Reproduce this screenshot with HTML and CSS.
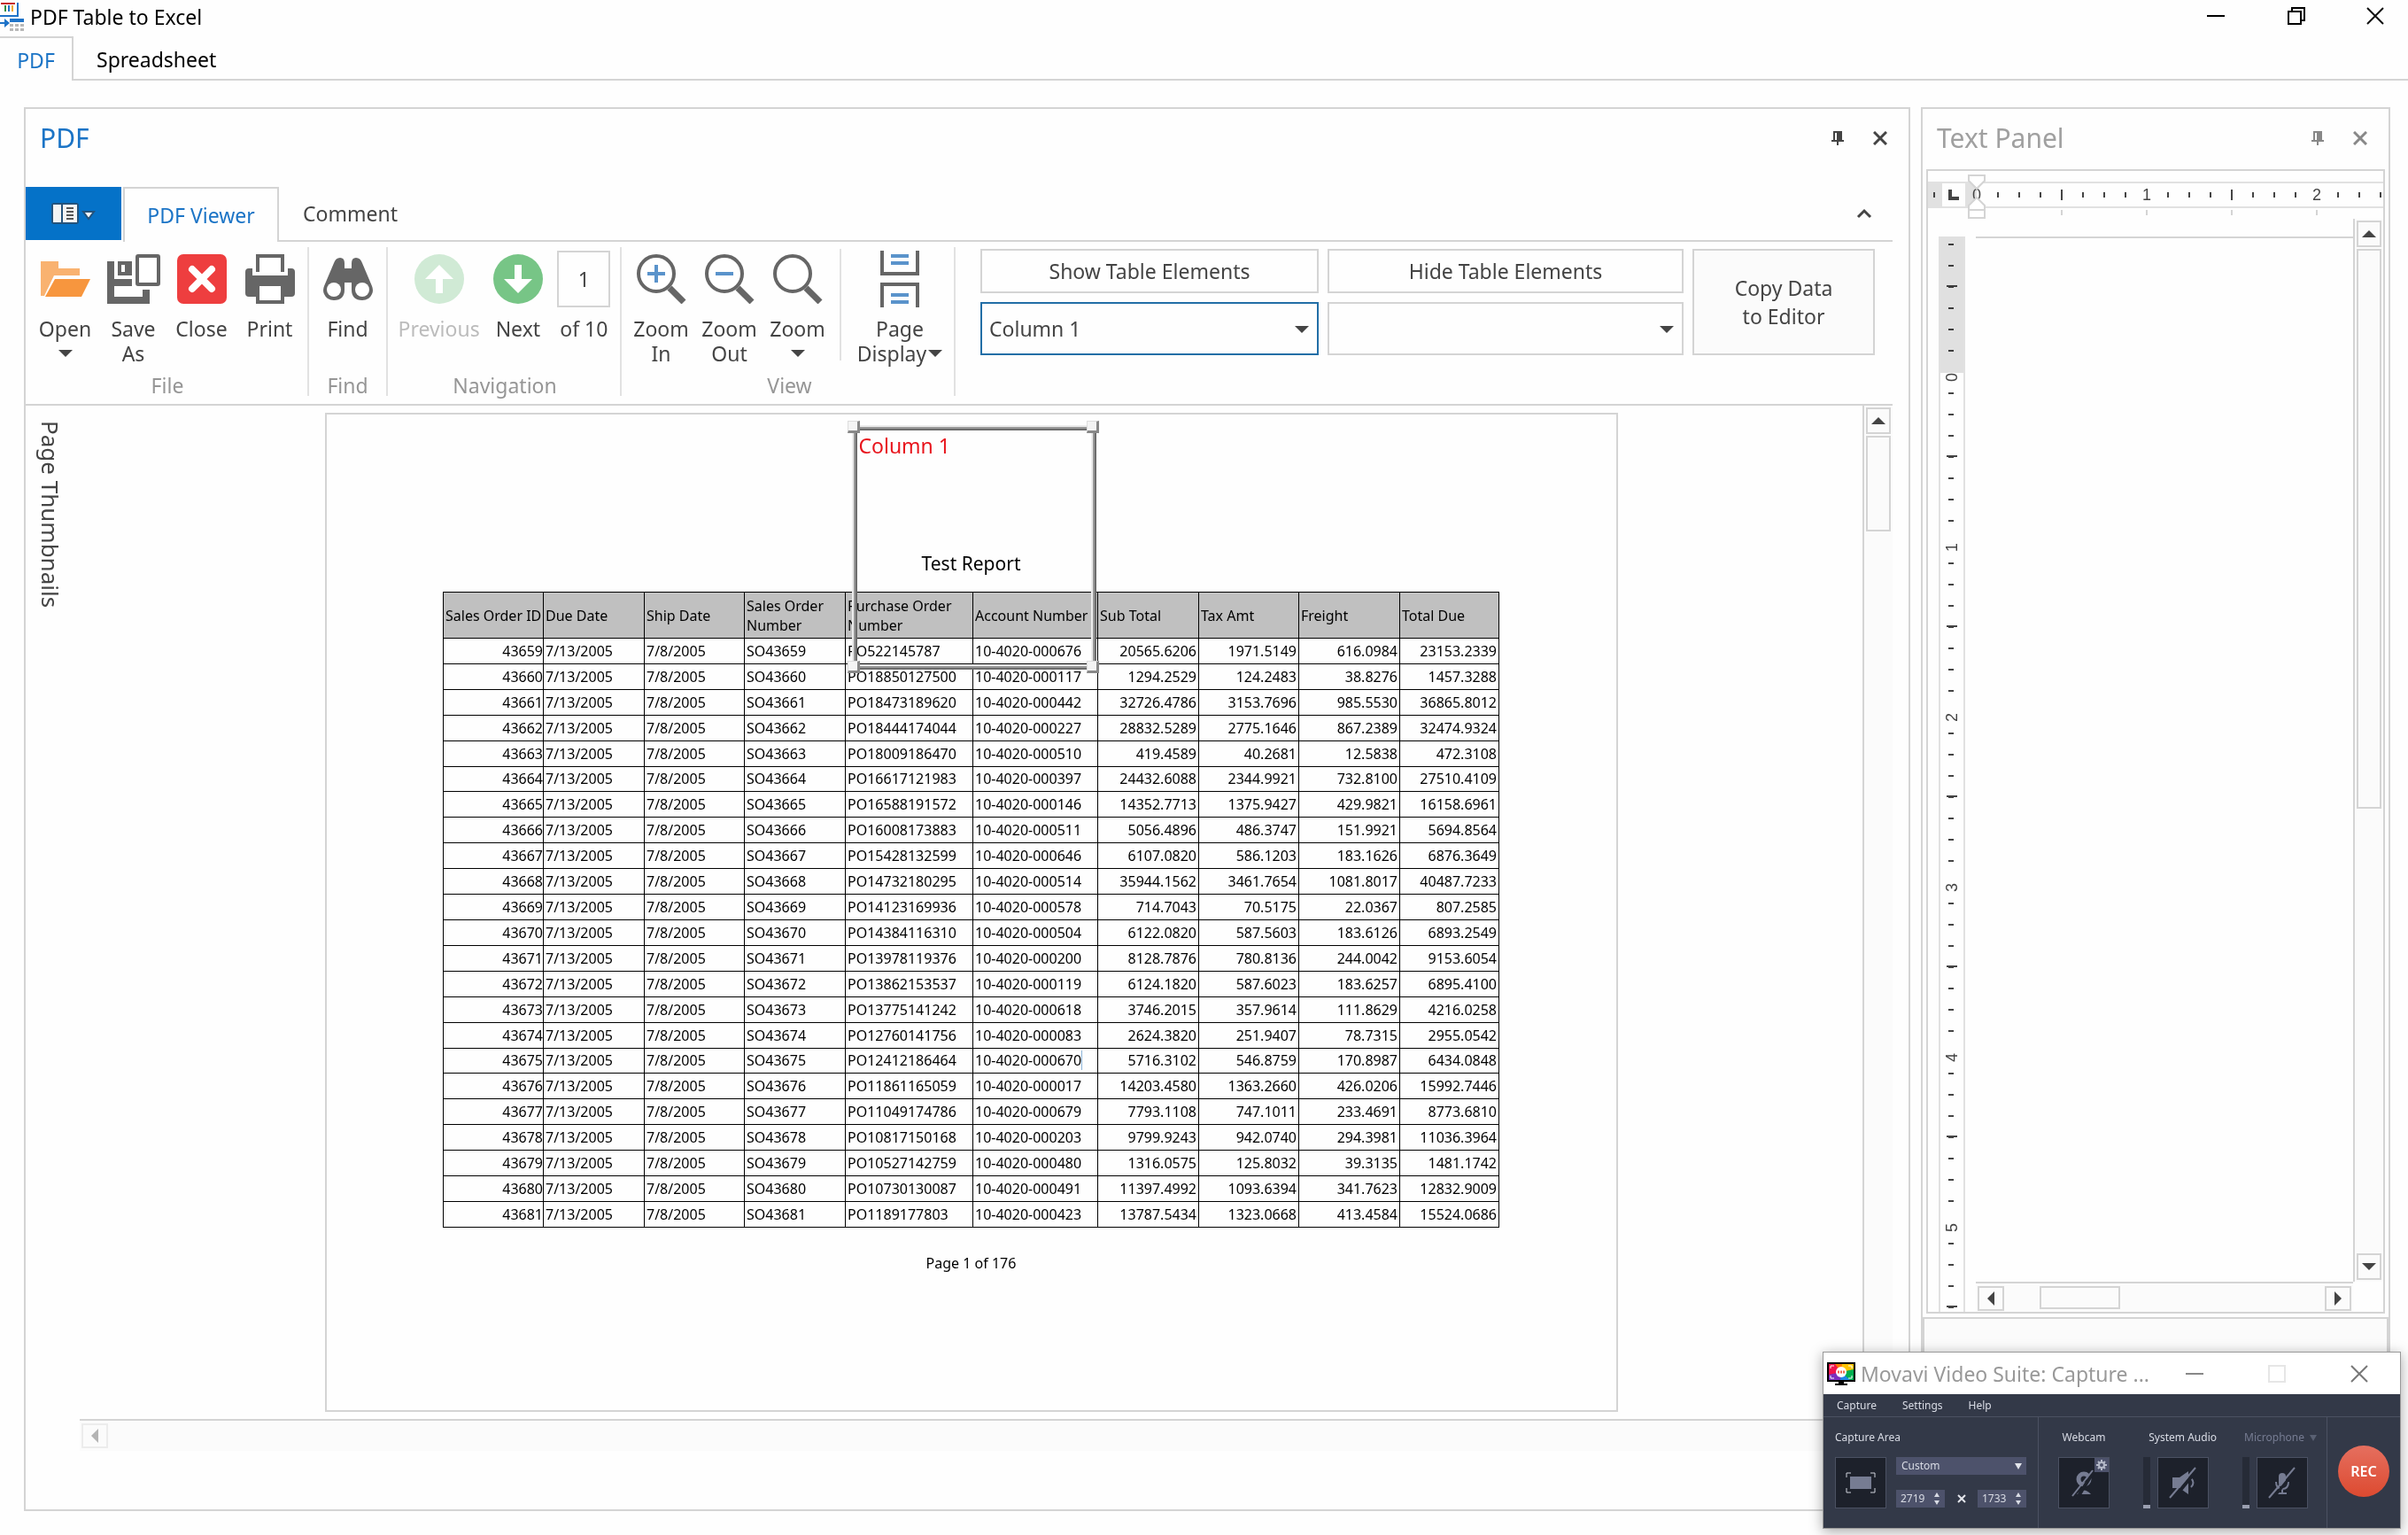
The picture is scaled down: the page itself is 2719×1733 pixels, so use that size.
FILE: index.html
```html
<!DOCTYPE html>
<html lang="en">
<head>
<meta charset="utf-8">
<title>PDF Table to Excel</title>
<link rel="stylesheet" href="styles.css">
</head>
<body>
<header class="titlebar">
  <svg class="app-icon" width="27" height="36" viewBox="0 0 27 36" aria-hidden="true">
    <path d="M1 2h16v2H1z" fill="#c62828"/><path d="M5 5h2v7H5z" fill="#2e8b3d"/><path d="M9 5h2v7H9z" fill="#1e73c8"/><path d="M13 5h2v7h-2z" fill="#f0a830"/>
    <path d="M20 2v15H0" fill="none" stroke="#1e73c8" stroke-width="2"/>
    <path d="M0 24h5v-4l6 5-6 5v-4H0z" fill="#1e73c8"/><path d="M11 20h16v4H11z" fill="#1e73c8"/>
    <path d="M11 26h4v3h-4zM17 26h4v3h-4zM23 26h4v3h-4zM11 31h4v3h-4zM17 31h4v3h-4zM23 31h4v3h-4z" fill="#b8b8b8"/>
  </svg>
  <h1 class="app-title">PDF Table to Excel</h1>
  <div class="window-buttons">
    <button class="win-btn" aria-label="Minimize"><svg width="20" height="20"><path d="M0 10h20" stroke="#000" stroke-width="2"/></svg></button>
    <button class="win-btn" aria-label="Restore"><svg width="20" height="20"><path d="M1 5h14v14H1zM5 5V1h14v14h-4" fill="none" stroke="#000" stroke-width="2"/></svg></button>
    <button class="win-btn" aria-label="Close"><svg width="20" height="20"><path d="M1 1l18 18M19 1L1 19" stroke="#111" stroke-width="2"/></svg></button>
  </div>
</header>
<nav class="doc-tabs">
  <button class="doc-tab active">PDF</button>
  <button class="doc-tab">Spreadsheet</button>
</nav>
<main class="workspace">
  <section class="panel pdf-panel">
    <div class="panel-head">
      <h2 class="panel-title">PDF</h2>
      <button class="head-btn" aria-label="Pin"><svg width="14" height="18" viewBox="0 0 14 18"><path d="M2 1h10v10h2v2H8v4H6v-4H0v-2h2z" fill="#444"/><path d="M4 3h2v8H4z" fill="#fff"/></svg></button>
      <button class="head-btn" aria-label="Close panel"><svg width="16" height="16"><path d="M1 1l14 14M15 1L1 15" stroke="#444" stroke-width="3"/></svg></button>
    </div>
    <div class="ribbon-tabs">
      <button class="file-btn" aria-label="File menu">
        <svg width="52" height="26" viewBox="0 0 52 26"><rect x="1" y="1" width="31" height="24" rx="3" fill="#24537c"/><path d="M3 3h9v20H3zM14 3h16v20H14z" fill="#f4f4f4"/><path d="M18 7h8M18 11h8M18 15h8M18 19h8" stroke="#555" stroke-width="2"/><path d="M37 11h12l-6 8z" fill="#fff" stroke="#24537c" stroke-width="2"/></svg>
      </button>
      <button class="ribbon-tab active">PDF Viewer</button>
      <button class="ribbon-tab">Comment</button>
      <button class="collapse-btn" aria-label="Collapse ribbon"><svg width="18" height="12"><path d="M2 10l7-7 7 7" fill="none" stroke="#444" stroke-width="3"/></svg></button>
    </div>
    <div class="ribbon">
      <div class="group file-group">
        <div class="group-row">
          <button class="tool"><span class="tool-icon"><svg width="56" height="56" viewBox="0 0 56 56"><path d="M0 8h20v8h24v8H15L4 47H0z" fill="#f9b270"/><path d="M16 28h40L46 48H5z" fill="#f7963e"/></svg></span>Open<i class="caret"></i></button>
          <button class="tool"><span class="tool-icon"><svg width="60" height="56" viewBox="0 0 60 56"><path d="M0 8h8v20h20v8H8v12h32v-8h8v16H0z" fill="#666"/><path d="M12 8h16v16H12zM16 12v8h4v-8z" fill="#666" fill-rule="evenodd"/><rect x="34" y="2" width="24" height="32" rx="1" fill="#fff" stroke="#666" stroke-width="4"/></svg></span>Save<br>As</button>
          <button class="tool"><span class="tool-icon"><svg width="56" height="56"><rect width="56" height="56" rx="7" fill="#ee3e3f"/><path d="M17 17l22 22M39 17L17 39" stroke="#fff" stroke-width="8" stroke-linecap="round"/></svg></span>Close</button>
          <button class="tool"><span class="tool-icon"><svg width="56" height="56"><path d="M14 20V2h28v18" fill="#fff" stroke="#666" stroke-width="4"/><path d="M4 16h4v8h40v-8h4q4 0 4 4v24q0 4-4 4H4q-4 0-4-4V20q0-4 4-4z" fill="#666"/><path d="M14 34h28v20H14z" fill="#fff" stroke="#666" stroke-width="4"/></svg></span>Print</button>
        </div>
        <div class="group-name">File</div>
      </div>
      <div class="group find-group">
        <div class="group-row">
          <button class="tool"><span class="tool-icon"><svg width="56" height="56"><path d="M12 10q2-6 7-6 5 0 5 6v6h8v-6q0-6 5-6 5 0 7 6l11 26q2 5 0 9-3 7-11 7-12 0-12-12v-8h-8v8q0 12-12 12-8 0-11-7-2-4 0-9z" fill="#666"/><circle cx="12" cy="40" r="8" fill="#fff"/><circle cx="44" cy="40" r="8" fill="#fff"/></svg></span>Find</button>
        </div>
        <div class="group-name">Find</div>
      </div>
      <div class="group nav-group">
        <div class="group-row">
          <button class="tool wide" disabled><span class="tool-icon"><svg width="56" height="56"><circle cx="28" cy="28" r="28" fill="#d0ead5"/><path d="M28 12l16 16H32v16h-8V28H12z" fill="#fff"/></svg></span>Previous</button>
          <button class="tool"><span class="tool-icon"><svg width="56" height="56"><circle cx="28" cy="28" r="28" fill="#77c586"/><path d="M28 44L12 28h12V12h8v16h12z" fill="#fff"/></svg></span>Next</button>
          <div class="pager"><input class="page-input" id="page" type="text" value="1"><label for="page">of 10</label></div>
        </div>
        <div class="group-name">Navigation</div>
      </div>
      <div class="group view-group">
        <div class="group-row">
          <button class="tool"><span class="tool-icon"><svg width="56" height="56"><circle cx="22" cy="22" r="20" fill="#fff" stroke="#666" stroke-width="4"/><path d="M37 38l16 16" stroke="#666" stroke-width="7"/><path d="M12 22h20M22 12v20" stroke="#5a93cb" stroke-width="4"/></svg></span>Zoom<br>In</button>
          <button class="tool"><span class="tool-icon"><svg width="56" height="56"><circle cx="22" cy="22" r="20" fill="#fff" stroke="#666" stroke-width="4"/><path d="M37 38l16 16" stroke="#666" stroke-width="7"/><path d="M12 22h20" stroke="#5a93cb" stroke-width="4"/></svg></span>Zoom<br>Out</button>
          <button class="tool"><span class="tool-icon"><svg width="56" height="56"><circle cx="22" cy="22" r="20" fill="#fff" stroke="#666" stroke-width="4"/><path d="M37 38l16 16" stroke="#666" stroke-width="7"/></svg></span>Zoom<i class="caret"></i></button>
          <div class="divider"></div>
          <button class="tool display"><span class="tool-icon"><svg width="44" height="64"><path d="M2 0v26h40V0M2 64V38h40v26" fill="none" stroke="#666" stroke-width="4"/><path d="M12 6h20M12 14h20M12 50h20M12 58h20" stroke="#5a93cb" stroke-width="4"/></svg></span>Page<br>Display<i class="caret inline"></i></button>
        </div>
        <div class="group-name">View</div>
      </div>
      <div class="table-tools">
        <button class="box-btn">Show Table Elements</button>
        <button class="box-btn">Hide Table Elements</button>
        <button class="box-btn copy-btn">Copy Data<br>to Editor</button>
        <div class="combo focused"><select aria-label="Table element"><option>Column 1</option></select></div>
        <div class="combo"><select aria-label="Hidden element"><option></option></select></div>
      </div>
    </div>
    <div class="viewer">
      <aside class="thumbs"><button class="thumbs-tab">Page Thumbnails</button></aside>
      <div class="viewport">
        <article class="page">
          <h3 class="report-title">Test Report</h3>
          <table class="report">
            <colgroup><col class="c-a"><col class="c-b"><col class="c-a"><col class="c-b"><col class="c-po"><col class="c-acc"><col class="c-b"><col class="c-a"><col class="c-b"><col class="c-last"></colgroup>
            <thead><tr><th>Sales Order ID</th><th>Due Date</th><th>Ship Date</th><th>Sales Order Number</th><th>Purchase Order Number</th><th>Account Number</th><th>Sub Total</th><th>Tax Amt</th><th>Freight</th><th>Total Due</th></tr></thead>
            <tbody>
            <tr><td>43659</td><td>7/13/2005</td><td>7/8/2005</td><td>SO43659</td><td>PO522145787</td><td>10-4020-000676</td><td>20565.6206</td><td>1971.5149</td><td>616.0984</td><td>23153.2339</td></tr>
            <tr><td>43660</td><td>7/13/2005</td><td>7/8/2005</td><td>SO43660</td><td>PO18850127500</td><td>10-4020-000117</td><td>1294.2529</td><td>124.2483</td><td>38.8276</td><td>1457.3288</td></tr>
            <tr><td>43661</td><td>7/13/2005</td><td>7/8/2005</td><td>SO43661</td><td>PO18473189620</td><td>10-4020-000442</td><td>32726.4786</td><td>3153.7696</td><td>985.5530</td><td>36865.8012</td></tr>
            <tr><td>43662</td><td>7/13/2005</td><td>7/8/2005</td><td>SO43662</td><td>PO18444174044</td><td>10-4020-000227</td><td>28832.5289</td><td>2775.1646</td><td>867.2389</td><td>32474.9324</td></tr>
            <tr><td>43663</td><td>7/13/2005</td><td>7/8/2005</td><td>SO43663</td><td>PO18009186470</td><td>10-4020-000510</td><td>419.4589</td><td>40.2681</td><td>12.5838</td><td>472.3108</td></tr>
            <tr><td>43664</td><td>7/13/2005</td><td>7/8/2005</td><td>SO43664</td><td>PO16617121983</td><td>10-4020-000397</td><td>24432.6088</td><td>2344.9921</td><td>732.8100</td><td>27510.4109</td></tr>
            <tr><td>43665</td><td>7/13/2005</td><td>7/8/2005</td><td>SO43665</td><td>PO16588191572</td><td>10-4020-000146</td><td>14352.7713</td><td>1375.9427</td><td>429.9821</td><td>16158.6961</td></tr>
            <tr><td>43666</td><td>7/13/2005</td><td>7/8/2005</td><td>SO43666</td><td>PO16008173883</td><td>10-4020-000511</td><td>5056.4896</td><td>486.3747</td><td>151.9921</td><td>5694.8564</td></tr>
            <tr><td>43667</td><td>7/13/2005</td><td>7/8/2005</td><td>SO43667</td><td>PO15428132599</td><td>10-4020-000646</td><td>6107.0820</td><td>586.1203</td><td>183.1626</td><td>6876.3649</td></tr>
            <tr><td>43668</td><td>7/13/2005</td><td>7/8/2005</td><td>SO43668</td><td>PO14732180295</td><td>10-4020-000514</td><td>35944.1562</td><td>3461.7654</td><td>1081.8017</td><td>40487.7233</td></tr>
            <tr><td>43669</td><td>7/13/2005</td><td>7/8/2005</td><td>SO43669</td><td>PO14123169936</td><td>10-4020-000578</td><td>714.7043</td><td>70.5175</td><td>22.0367</td><td>807.2585</td></tr>
            <tr><td>43670</td><td>7/13/2005</td><td>7/8/2005</td><td>SO43670</td><td>PO14384116310</td><td>10-4020-000504</td><td>6122.0820</td><td>587.5603</td><td>183.6126</td><td>6893.2549</td></tr>
            <tr><td>43671</td><td>7/13/2005</td><td>7/8/2005</td><td>SO43671</td><td>PO13978119376</td><td>10-4020-000200</td><td>8128.7876</td><td>780.8136</td><td>244.0042</td><td>9153.6054</td></tr>
            <tr><td>43672</td><td>7/13/2005</td><td>7/8/2005</td><td>SO43672</td><td>PO13862153537</td><td>10-4020-000119</td><td>6124.1820</td><td>587.6023</td><td>183.6257</td><td>6895.4100</td></tr>
            <tr><td>43673</td><td>7/13/2005</td><td>7/8/2005</td><td>SO43673</td><td>PO13775141242</td><td>10-4020-000618</td><td>3746.2015</td><td>357.9614</td><td>111.8629</td><td>4216.0258</td></tr>
            <tr><td>43674</td><td>7/13/2005</td><td>7/8/2005</td><td>SO43674</td><td>PO12760141756</td><td>10-4020-000083</td><td>2624.3820</td><td>251.9407</td><td>78.7315</td><td>2955.0542</td></tr>
            <tr><td>43675</td><td>7/13/2005</td><td>7/8/2005</td><td>SO43675</td><td>PO12412186464</td><td><span class="insertion">10-4020-000670</span></td><td>5716.3102</td><td>546.8759</td><td>170.8987</td><td>6434.0848</td></tr>
            <tr><td>43676</td><td>7/13/2005</td><td>7/8/2005</td><td>SO43676</td><td>PO11861165059</td><td>10-4020-000017</td><td>14203.4580</td><td>1363.2660</td><td>426.0206</td><td>15992.7446</td></tr>
            <tr><td>43677</td><td>7/13/2005</td><td>7/8/2005</td><td>SO43677</td><td>PO11049174786</td><td>10-4020-000679</td><td>7793.1108</td><td>747.1011</td><td>233.4691</td><td>8773.6810</td></tr>
            <tr><td>43678</td><td>7/13/2005</td><td>7/8/2005</td><td>SO43678</td><td>PO10817150168</td><td>10-4020-000203</td><td>9799.9243</td><td>942.0740</td><td>294.3981</td><td>11036.3964</td></tr>
            <tr><td>43679</td><td>7/13/2005</td><td>7/8/2005</td><td>SO43679</td><td>PO10527142759</td><td>10-4020-000480</td><td>1316.0575</td><td>125.8032</td><td>39.3135</td><td>1481.1742</td></tr>
            <tr><td>43680</td><td>7/13/2005</td><td>7/8/2005</td><td>SO43680</td><td>PO10730130087</td><td>10-4020-000491</td><td>11397.4992</td><td>1093.6394</td><td>341.7623</td><td>12832.9009</td></tr>
            <tr><td>43681</td><td>7/13/2005</td><td>7/8/2005</td><td>SO43681</td><td>PO1189177803</td><td>10-4020-000423</td><td>13787.5434</td><td>1323.0668</td><td>413.4584</td><td>15524.0686</td></tr>
            </tbody>
          </table>
          <p class="page-no">Page 1 of 176</p>
          <div class="selection">
            <span class="selection-label">Column 1</span>
            <i class="handle tl"></i><i class="handle tr"></i><i class="handle bl"></i><i class="handle br"></i>
          </div>
        </article>
      </div>
      <div class="vscroll">
        <button class="sb-btn" aria-label="Scroll up"><svg width="16" height="8"><path d="M0 8h16L8 0z" fill="#444"/></svg></button>
        <div class="sb-thumb doc-thumb"></div>
      </div>
      <div class="hscroll doc-hscroll">
        <button class="sb-btn" disabled aria-label="Scroll left"><svg width="8" height="16"><path d="M8 0v16L0 8z" fill="#b4b4b4"/></svg></button>
      </div>
    </div>
  </section>
  <div class="side">
    <section class="panel text-panel">
      <div class="panel-head muted">
        <h2 class="panel-title">Text Panel</h2>
        <button class="head-btn" aria-label="Pin"><svg width="14" height="18" viewBox="0 0 14 18"><path d="M2 1h10v10h2v2H8v4H6v-4H0v-2h2z" fill="#888"/><path d="M4 3h2v8H4z" fill="#fff"/></svg></button>
        <button class="head-btn" aria-label="Close panel"><svg width="16" height="16"><path d="M1 1l14 14M15 1L1 15" stroke="#888" stroke-width="3"/></svg></button>
      </div>
      <div class="editor">
        <div class="hruler">
          <div class="hr-pre"></div>
          <button class="tab-well" aria-label="Tab type"><svg width="12" height="12"><path d="M2 0v10h10" fill="none" stroke="#444" stroke-width="4"/></svg></button>
          <div class="hr-margin"></div>
          <div class="hr-scale"><span><b>0</b></span><span><b>1</b></span><span><b>2</b></span></div>
          <svg class="indent" width="20" height="50"><path d="M1 1h18v6l-9 9-9-9z M10 26l9 9v5H1v-5z M1 40h18v9H1z" fill="#fff" stroke="#d4d4d4" stroke-width="2"/></svg>
        </div>
        <div class="tab-stops"></div>
        <div class="editor-body">
          <div class="vruler"><div class="vr-margin"></div><div class="vr-nums"><span>0</span><span>1</span><span>2</span><span>3</span><span>4</span><span>5</span></div></div>
          <div class="sheet"></div>
          <div class="vscroll">
            <button class="sb-btn" aria-label="Scroll up"><svg width="16" height="8"><path d="M0 8h16L8 0z" fill="#444"/></svg></button>
            <div class="sb-thumb"></div>
            <button class="sb-btn end" aria-label="Scroll down"><svg width="16" height="8"><path d="M0 0h16L8 8z" fill="#444"/></svg></button>
          </div>
          <div class="hscroll">
            <button class="sb-btn" aria-label="Scroll left"><svg width="8" height="16"><path d="M8 0v16L0 8z" fill="#444"/></svg></button>
            <div class="sb-thumb"></div>
            <button class="sb-btn end" aria-label="Scroll right"><svg width="8" height="16"><path d="M0 0v16l8-8z" fill="#444"/></svg></button>
          </div>
        </div>
      </div>
      <div class="lower-pane"></div>
    </section>
  </div>
</main>

<section class="recorder">
  <div class="rec-title">
    <svg width="32" height="26" viewBox="0 0 32 26"><path d="M0 0h32v22H0z" fill="#000"/><path d="M2 2h9l5 9-14 5z" fill="#f0134d"/><path d="M9 2h12l-5 9z" fill="#ff7a00"/><path d="M17 2h13v7l-14 2z" fill="#ffc400"/><path d="M30 8v12h-5l-9-9z" fill="#00b050"/><path d="M16 11l10 9H13z" fill="#1e88e5"/><path d="M16 11L2 14v6h13z" fill="#7b2fbe"/><path d="M4 7V4h4M24 4h4v3M28 15v3h-4M8 18H4v-3" fill="none" stroke="#fff"/><circle cx="16" cy="11" r="6" fill="#fff"/><path d="M12 11h8" stroke="#f26a4f" stroke-width="3" stroke-dasharray="2 1"/><path d="M13 22h6v2h4v2H9v-2h4z" fill="#000"/></svg>
    <h2>Movavi Video Suite: Capture ...</h2>
    <button class="win-btn" aria-label="Minimize"><svg width="20" height="20"><path d="M0 10h20" stroke="#888" stroke-width="2"/></svg></button>
    <button class="win-btn" disabled aria-label="Maximize"><svg width="20" height="20"><path d="M1 1h18v18H1z" fill="none" stroke="#e6e6e6" stroke-width="2"/></svg></button>
    <button class="win-btn" aria-label="Close"><svg width="20" height="20"><path d="M1 1l18 18M19 1L1 19" stroke="#777" stroke-width="2"/></svg></button>
  </div>
  <nav class="rec-menu"><button>Capture</button><button>Settings</button><button>Help</button></nav>
  <div class="rec-body">
    <div class="rec-area">
      <span class="rec-label">Capture Area</span>
      <button class="rec-tile" aria-label="Select area"><svg width="34" height="24"><rect x="5" y="5" width="24" height="14" fill="#767c92"/><path d="M1 6V1h5M28 1h5v5M33 18v5h-5M6 23H1v-5" fill="none" stroke="#d0d3dc" stroke-width="1"/></svg></button>
      <div class="rec-select"><select aria-label="Preset"><option>Custom</option></select></div>
      <div class="rec-size">
        <div class="spin"><input type="text" value="2719" aria-label="Width"><svg width="6" height="14"><path d="M0 5h6L3 0zM0 9h6l-3 5z" fill="#d8dbe4"/></svg></div>
        <svg width="10" height="10"><path d="M1 1l8 8M9 1L1 9" stroke="#e4e6ec" stroke-width="2"/></svg>
        <div class="spin"><input type="text" value="1733" aria-label="Height"><svg width="6" height="14"><path d="M0 5h6L3 0zM0 9h6l-3 5z" fill="#d8dbe4"/></svg></div>
      </div>
    </div>
    <div class="rec-sources">
      <div class="source">
        <span class="rec-label">Webcam</span>
        <div class="source-row"><button class="rec-tile webcam" aria-label="Webcam"><svg width="34" height="38"><circle cx="17" cy="15" r="6" fill="none" stroke="#767c92" stroke-width="5"/><path d="M9 32q8-9 16 0z" fill="#767c92"/><path d="M29 5L9 37" stroke="#1d212b" stroke-width="4"/><path d="M27 5L4 34" stroke="#767c92" stroke-width="2"/></svg>
          <span class="gear"><svg width="12" height="12"><circle cx="6" cy="6" r="3" fill="none" stroke="#b4b9c8" stroke-width="2"/><path d="M6 0v3M6 9v3M0 6h3M9 6h3M2 2l2 2M8 8l2 2M10 2L8 4M4 8l-2 2" stroke="#b4b9c8" stroke-width="2"/></svg></span></button></div>
      </div>
      <div class="source audio">
        <span class="rec-label">System Audio</span>
        <div class="source-row"><i class="level"></i><button class="rec-tile" aria-label="System audio"><svg width="34" height="38"><path d="M5 13h8l10-7v26l-10-7H5z" fill="#767c92"/><path d="M26 14q5 5 0 10" fill="none" stroke="#767c92" stroke-width="2"/><path d="M33 4L6 37" stroke="#1d212b" stroke-width="4"/><path d="M31 2L2 36" stroke="#767c92" stroke-width="2"/></svg></button></div>
      </div>
      <div class="source mic">
        <span class="rec-label">Microphone<i></i></span>
        <div class="source-row"><i class="level"></i><button class="rec-tile" aria-label="Microphone"><svg width="34" height="38"><rect x="13" y="8" width="8" height="15" rx="4" fill="#767c92"/><path d="M10 18q0 8 7 8t7-8M17 26v5M12 31h10" fill="none" stroke="#767c92" stroke-width="2"/><path d="M33 4L6 37" stroke="#1d212b" stroke-width="3"/><path d="M31 2L2 36" stroke="#767c92" stroke-width="2"/></svg></button></div>
      </div>
    </div>
    <div class="rec-go"><button class="rec-btn">REC</button></div>
  </div>
</section>
</body>
</html>
```
FILE: styles.css
```css
* { box-sizing: border-box; }
html, body { height: 100%; margin: 0; }
body {
  display: flex; flex-direction: column; overflow: hidden;
  background: #fefefe; color: #444;
  font: 23px/28px "Noto Sans", "Open Sans", sans-serif;
}
h1, h2, h3, p { margin: 0; font-weight: 400; }
button, input, select { font: inherit; color: inherit; background: none; border: 0; border-radius: 0; padding: 0; margin: 0; appearance: none; outline: 0; }
svg { display: block; flex: none; }
i { font-style: normal; }

/* window frame */
.titlebar { display: flex; align-items: center; height: 41px; flex: none; color: #000; padding-bottom: 4px; }
.app-title { font-size: 23px; margin-left: 7px; }
.window-buttons { margin-left: auto; display: flex; height: 34px; padding-bottom: 2px; }
.win-btn { display: flex; align-items: center; justify-content: center; width: 93px; }
.window-buttons .win-btn:last-child { width: 74px; margin-left: 8px; }
.window-buttons .win-btn:nth-child(2) { width: 89px; }
.doc-tabs { display: flex; height: 50px; flex: none; }
.doc-tabs::after { content: ""; flex: 1; border-bottom: 2px solid #d4d4d4; }
.doc-tab { padding: 4px 26px 0; color: #000; border-bottom: 2px solid #d4d4d4; }
.doc-tab.active { width: 83px; padding: 2px 0 0; color: #1b74c6; border: 2px solid #d4d4d4; border-width: 2px 2px 0 0; }

/* docked panels */
.workspace { flex: 1; min-height: 0; display: flex; gap: 12px; padding: 30px 20px 27px 27px; }
.panel { border: 2px solid #d4d4d4; display: flex; flex-direction: column; min-height: 0; }
.pdf-panel { flex: 1; min-width: 0; padding: 0 18px 66px 0; }
.side { width: 530px; display: flex; flex-direction: column; }
.text-panel { flex: 1; }
.panel-head { display: flex; align-items: center; flex: none; height: 68px; padding: 0 0 2px 16px; color: #1b74c6; }
.panel-title { flex: 1; font-size: 30px; line-height: 36px; }
.panel-head.muted { color: #a0a0a0; }
.head-btn { width: 48px; display: flex; justify-content: center; }
.pdf-panel .panel-head { margin-right: -10px; }
.muted .head-btn:last-child { margin-right: 8px; }

/* ribbon */
.ribbon-tabs { display: flex; flex: none; margin-top: 20px; height: 62px; }
.file-btn { width: 108px; background: #0572c8; margin-bottom: 2px; display: flex; align-items: center; justify-content: center; }
.ribbon-tab { padding: 0 27px; border-bottom: 2px solid #d4d4d4; }
.ribbon-tab.active { width: 176px; padding: 0; margin-left: 2px; color: #1b74c6; border: 2px solid #d4d4d4; border-bottom: 0; }
.collapse-btn { flex: 1; display: flex; justify-content: flex-end; align-items: center; padding-right: 23px; border-bottom: 2px solid #d4d4d4; }
.ribbon { display: flex; flex: none; height: 185px; border-bottom: 2px solid #d4d4d4; }
.group { display: flex; flex-direction: column; justify-content: space-between; margin: 6px 0 9px; border-right: 2px solid #e2e2e2; }
.group-row { display: flex; height: 129px; }
.group-name { text-align: center; color: #969696; margin-bottom: -2px; }
.tool { width: 77px; display: block; text-align: center; align-self: flex-start; }
.tool-icon { display: flex; align-items: center; justify-content: center; height: 72px; margin-bottom: 6px; }
.tool:disabled { color: #bcbcbc; }
.caret { display: block; width: 0; margin: 10px auto 0; border: 8px solid transparent; border-top-color: #444; border-bottom: 0; }
.caret.inline { display: inline-block; margin: 0 0 5px 2px; }
.file-group { width: 320px; padding: 0 4px 0 6px; }
.find-group { width: 89px; padding: 0 5px; }
.nav-group { width: 264px; padding: 0 3px 0 5px; }
.nav-group .tool { width: 74px; }
.nav-group .tool.wide { width: 106px; }
.view-group { width: 377px; padding: 0 2px 0 6px; }
.divider { width: 2px; height: 126px; margin: 2px 0 0 9px; background: #e2e2e2; }
.tool.display { width: 124px; padding-left: 8px; }
.pager { width: 76px; text-align: center; }
.page-input { width: 60px; height: 64px; margin: 4px 0 10px; display: inline-block; vertical-align: top; text-align: center; border: 2px solid #d4d4d4; }
.table-tools {
  flex: 1; display: grid; grid-template: 50px 60px / 382fr 402fr 206fr; gap: 10px;
  padding: 8px 20px 0 28px;
}
.box-btn { border: 2px solid #d4d4d4; }
.copy-btn { grid-area: 1 / 3 / 3 / 4; background: #fbfbfb; line-height: 32px; }
.combo { position: relative; border: 2px solid #d4d4d4; display: flex; }
.combo.focused { border-color: #226ea6; }
.combo select { width: 100%; padding-left: 8px; }
.combo::after { content: ""; position: absolute; right: 9px; top: 25px; border: 8px solid transparent; border-top-color: #444; border-bottom: 0; pointer-events: none; }

/* document viewer */
.viewer { flex: 1; min-height: 0; display: grid; grid-template: minmax(0, 1fr) 36px / 61px minmax(0, 1fr) 34px; }
.thumbs { grid-row: 1 / 3; }
.thumbs-tab { writing-mode: vertical-rl; font-size: 26px; line-height: 36px; margin: 17px 0 0 10px; }
.viewport { display: flex; justify-content: center; padding: 8px 0; }
.page { position: relative; width: 1460px; border: 2px solid #d4d4d4; color: #000; display: flex; flex-direction: column; align-items: center; }
.report-title { font-size: 21px; line-height: 28px; margin-top: 154px; }
.report { table-layout: fixed; width: 1192px; height: 718px; margin-top: 18px; border-collapse: collapse; font-size: 16px; line-height: 22px; }
.c-a { width: 113px; } .c-b { width: 114px; } .c-po { width: 144px; } .c-acc { width: 141px; } .c-last { width: 112px; }
.report th, .report td { border: 1px solid #000; padding: 0 2px; text-align: left; white-space: nowrap; }
.report th { height: 52px; background: #c0c0c0; font-weight: 400; white-space: normal; }
.report th:first-child { white-space: nowrap; }
.report td:first-child, .report td:nth-child(n+7) { text-align: right; }
.report td:first-child { padding-right: 0; }
.insertion { border-right: 1px solid #8cb4d8; }
.page-no { font-size: 16px; line-height: 24px; margin-top: 28px; }

.selection {
  position: absolute; left: 593px; top: 12px; width: 276px; height: 276px; padding: 9px 8px;
  background:
    linear-gradient(#ececec 0 2px, #999 2px 4px, #6c6c6c 4px) 0 0 / 100% 6px no-repeat,
    linear-gradient(#ececec 0 2px, #999 2px 4px, #6c6c6c 4px) 0 100% / 100% 6px no-repeat,
    linear-gradient(90deg, #ececec 0 2px, #999 2px 4px, #6c6c6c 4px) 0 0 / 6px 100% no-repeat,
    linear-gradient(90deg, #ececec 0 2px, #999 2px 4px, #6c6c6c 4px) 100% 0 / 6px 100% no-repeat;
}
.selection-label { color: #e8141c; }
.handle { position: absolute; width: 14px; height: 14px; background: #f4f4f4; border: solid; border-width: 1px 3px 3px 1px; border-color: #ddd #888 #888 #ddd; }
.tl, .tr { top: -5px; } .bl, .br { bottom: -4px; }
.tl, .bl { left: -5px; } .tr, .br { right: -3px; }

/* scroll bars */
.vscroll { background: #fbfbfb; border-left: 2px solid #d4d4d4; padding: 2px; display: flex; flex-direction: column; gap: 2px; }
.hscroll { background: #fbfbfb; border-top: 2px solid #d4d4d4; padding: 3px 2px; display: flex; }
.sb-btn { flex: none; width: 28px; height: 30px; border: 2px solid #d4d4d4; display: flex; align-items: center; justify-content: center; }
.hscroll .sb-btn { width: 30px; height: 28px; }
.sb-btn:disabled { border-color: #ececec; }
.sb-thumb { border: 2px solid #d4d4d4; }
.doc-thumb { height: 108px; width: 28px; }
.doc-hscroll { grid-column: 2 / 3; }

/* text editor */
.editor { margin: 0 4px; border: 2px solid #d4d4d4; height: 1292px; flex: none; display: flex; flex-direction: column; }
.hruler { position: relative; margin-top: 12px; height: 30px; flex: none; display: flex; border: 2px solid #e1e1e1; border-width: 2px 0; }
.hr-pre { width: 16px; background: linear-gradient(#444, #444) 6px 50% / 2px 6px no-repeat #e1e1e1; }
.tab-well { width: 26px; display: flex; align-items: center; justify-content: center; }
.hr-margin { width: 13px; background: #e1e1e1; }
.hr-scale {
  flex: 1; display: flex; clip-path: inset(0 0 0 -12px); min-width: 0;
  background: linear-gradient(#444, #444) 95px 50% / 2px 12px no-repeat, linear-gradient(#444, #444) 287px 50% / 2px 12px no-repeat,
    repeating-linear-gradient(90deg, #444 0 2px, transparent 2px 24px) -1px 50% / 100% 6px no-repeat;
}
.hr-scale span { flex: none; width: 192px; text-align: center; font: 18px/26px "Liberation Sans", sans-serif; }
.hr-scale span:first-child { margin-left: -96px; }
.hr-scale b { font-weight: 400; display: inline-block; width: 14px; background: #fefefe; }
.hr-scale span:first-child b { background: linear-gradient(90deg, #e1e1e1 50%, #fefefe 50%); }
.indent { position: absolute; left: 45px; top: -10px; }
.tab-stops { flex: none; height: 8px; margin: 2px 0 0 150px; background: repeating-linear-gradient(90deg, #d4d4d4 0 2px, transparent 2px 96px); background-size: 100% 6px; background-repeat: no-repeat; }
.editor-body { flex: 1; min-height: 0; margin-top: 2px; display: grid; grid-template: minmax(0, 1fr) 34px / 54px minmax(0, 1fr) 34px; }
.vruler {
  grid-row: 1 / 3; margin: 20px 12px 0; border: 2px solid #e1e1e1; border-width: 0 2px; width: 30px;
  background: repeating-linear-gradient(#fefefe 0 6px, transparent 6px 192px) 0 150px / 100% 1200px no-repeat,
    repeating-linear-gradient(transparent 0 94px, #444 94px 96px, transparent 96px 192px) 7px -39px / 12px 1300px no-repeat,
    repeating-linear-gradient(#444 0 2px, transparent 2px 24px) 9px 8px / 6px 1300px no-repeat;
  overflow: hidden;
}
.vr-margin { height: 154px; background: #e1e1e1; mix-blend-mode: multiply; }
.vr-nums span { display: flex; justify-content: flex-end; height: 192px; writing-mode: vertical-rl; font: 18px/26px "Liberation Sans", sans-serif; transform: rotate(180deg); }
.sheet { margin-top: 20px; border-top: 2px solid #d4d4d4; }
.editor-body .vscroll .sb-thumb { height: 632px; }
.end { margin-top: auto; }
.editor-body .hscroll .end { margin: 0 0 0 auto; }
.editor-body .hscroll .sb-thumb { width: 91px; margin-left: 40px; }
.lower-pane { flex: 1; margin-top: 4px; border: 2px solid #d4d4d4; background: #fbfbfb; }

/* floating recorder window */
.recorder { position: absolute; right: 8px; bottom: 7px; width: 653px; height: 200px; border: 1px solid #999; background: #333948; color: #d8dbe4; font-size: 12px; line-height: 16px; box-shadow: 0 3px 14px rgba(0, 0, 0, .35); display: flex; flex-direction: column; }
.rec-title { height: 47px; flex: none; display: flex; align-items: center; background: #fff; color: #999; padding: 0 0 0 4px; }
.rec-title h2 { flex: 1; font-size: 23px; line-height: 30px; margin-left: 6px; white-space: nowrap; }
.rec-menu { display: flex; gap: 29px; height: 26px; flex: none; padding-left: 15px; border-bottom: 1px solid #4b5162; }
.rec-body { flex: 1; display: grid; grid-template-columns: 242px 1fr 82px; }
.rec-area { display: grid; grid-template: 30px 37px 21px / 58px 147px; column-gap: 11px; padding: 15px 0 0 13px; }
.rec-area .rec-label { grid-column: 1 / 3; }
.rec-tile { position: relative; width: 58px; height: 58px; background: #1d212b; border: 1px solid #4b5162; display: flex; align-items: center; justify-content: center; }
.rec-area .rec-tile { grid-row: 2 / 4; }
.rec-select { position: relative; height: 20px; background: #4d526b; display: flex; }
.rec-select select { width: 100%; padding-left: 6px; }
.rec-select::after { content: ""; position: absolute; right: 5px; top: 7px; border: 4px solid transparent; border-top: 7px solid #e4e6ec; border-bottom: 0; }
.rec-size { display: flex; align-items: center; justify-content: space-between; height: 20px; }
.spin { width: 55px; height: 20px; background: #4d526b; display: flex; align-items: center; gap: 8px; padding-left: 5px; }
.spin input { width: 30px; }
.rec-sources { display: flex; border: solid #4b5162; border-width: 0 1px; padding: 15px 0 0 22px; }
.source { display: flex; flex-direction: column; align-items: center; gap: 14px; width: 58px; white-space: nowrap; }
.source-row { display: flex; gap: 8px; align-self: flex-start; }
.audio { width: 83px; margin-left: 38px; align-items: flex-end; }
.mic { width: 84px; margin-left: 29px; align-items: flex-end; color: #767c92; }
.rec-label i { display: inline-block; margin-left: 6px; border: 4px solid transparent; border-top: 7px solid #596072; border-bottom: 0; }
.level { width: 8px; border-bottom: 4px solid #9a9fb0; background: #262b37; }
.gear { position: absolute; right: 0; top: 0; width: 16px; height: 16px; background: #4d526b; display: flex; align-items: center; justify-content: center; }
.rec-go { padding: 32px 12px 0; }
.rec-btn { width: 58px; height: 58px; border-radius: 50%; background: linear-gradient(#e56f5f, #dd4a30); color: #fff; font-size: 16px; font-weight: 600; }
```
